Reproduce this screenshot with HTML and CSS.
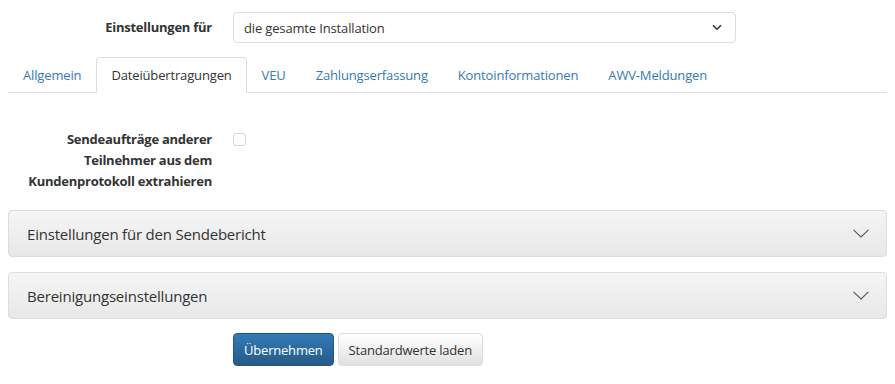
FILE: index.html
```html
<!DOCTYPE html>
<html lang="de">
<head>
<meta charset="utf-8">
<title>Einstellungen</title>
<link rel="stylesheet" href="styles.css">
</head>
<body>
<div class="page">
  <div class="form-row top-row">
    <label class="row-label" for="scope">Einstellungen für</label>
    <div class="select">
      <span class="select-value">die gesamte Installation</span>
      <svg class="select-caret" width="10" height="7" viewBox="0 0 10 7"><path d="M1 1.2 L5 5.2 L9 1.2" fill="none" stroke="#333" stroke-width="1.6"/></svg>
    </div>
  </div>

  <ul class="tabs">
    <li class="tab">Allgemein</li>
    <li class="tab active">Dateiübertragungen</li>
    <li class="tab">VEU</li>
    <li class="tab">Zahlungserfassung</li>
    <li class="tab">Kontoinformationen</li>
    <li class="tab">AWV-Meldungen</li>
  </ul>

  <div class="form-row check-row">
    <div class="row-label">Sendeaufträge anderer<br>Teilnehmer aus dem<br>Kundenprotokoll extrahieren</div>
    <div class="checkbox-cell"><span class="checkbox"></span></div>
  </div>

  <div class="panel">
    <span class="panel-title">Einstellungen für den Sendebericht</span>
    <svg class="panel-caret" width="16" height="9" viewBox="0 0 16 9"><path d="M0.5 0.8 L8 8 L15.5 0.8" fill="none" stroke="#555" stroke-width="1.1"/></svg>
  </div>
  <div class="panel">
    <span class="panel-title">Bereinigungseinstellungen</span>
    <svg class="panel-caret" width="16" height="9" viewBox="0 0 16 9"><path d="M0.5 0.8 L8 8 L15.5 0.8" fill="none" stroke="#555" stroke-width="1.1"/></svg>
  </div>

  <div class="actions">
    <button class="btn btn-primary">Übernehmen</button>
    <button class="btn btn-default">Standardwerte laden</button>
  </div>
</div>
</body>
</html>
```
FILE: styles.css
```css
* { box-sizing: border-box; }
html, body { margin: 0; padding: 0; background: #fff; }
body {
  font-family: "Open Sans", "Noto Sans", sans-serif;
  font-size: 13px;
  letter-spacing: -0.15px;
  color: #333;
}
.page { padding: 12px 8px 0 8px; }

.form-row {
  display: grid;
  grid-template-columns: 204px 1fr;
  column-gap: 21px;
}
.row-label {
  text-align: right;
  font-weight: 700;
  line-height: 21px;
  letter-spacing: -0.25px;
}
.top-row { align-items: center; }
.select {
  width: 503px;
  height: 31px;
  border: 1px solid #dcdcdc;
  border-radius: 4px;
  display: flex;
  align-items: center;
  justify-content: space-between;
  padding: 0 13px 0 10px;
}
.select-caret { display: block; }

.tabs {
  list-style: none;
  margin: 14px 0 0 0;
  padding: 0;
  display: flex;
  border-bottom: 1px solid #dddddd;
}
.tab {
  padding: 7px 14px 7px 14px;
  line-height: 20px;
  color: #337ab7;
  border: 1px solid transparent;
  border-radius: 4px 4px 0 0;
  margin-bottom: -1px;
}
.tab.active {
  color: #333;
  border-color: #dddddd;
  border-bottom-color: #fff;
  background: #fff;
}

.check-row { margin-top: 36px; }
.checkbox-cell { padding-top: 4px; }
.checkbox {
  display: block;
  width: 13px;
  height: 13px;
  border: 1px solid #d4d4d4;
  border-radius: 3px;
  background: #fff;
}

.panel {
  margin-top: 15px;
  height: 47px;
  border: 1px solid #dddddd;
  border-radius: 4px;
  background: linear-gradient(to bottom, #f5f5f5, #e8e8e8);
  display: flex;
  align-items: center;
  justify-content: space-between;
  padding: 0 17px 0 18px;
}
.check-row + .panel { margin-top: 18px; }
.panel-title { font-size: 15px; color: #333; letter-spacing: -0.2px; }
.panel-caret { display: block; }

.actions {
  margin-top: 14px;
  padding-left: 225px;
  display: flex;
  gap: 4px;
}
.btn {
  font-family: inherit;
  font-size: 13px;
  letter-spacing: -0.2px;
  height: 33px;
  padding: 0 10px;
  border-radius: 4px;
  cursor: pointer;
}
.btn-primary {
  color: #fff;
  border: 1px solid #245580;
  background: linear-gradient(to bottom, #337ab7, #265a88);
}
.btn-default {
  color: #333;
  border: 1px solid #dcdcdc;
  background: linear-gradient(to bottom, #fff, #e0e0e0);
}
```
